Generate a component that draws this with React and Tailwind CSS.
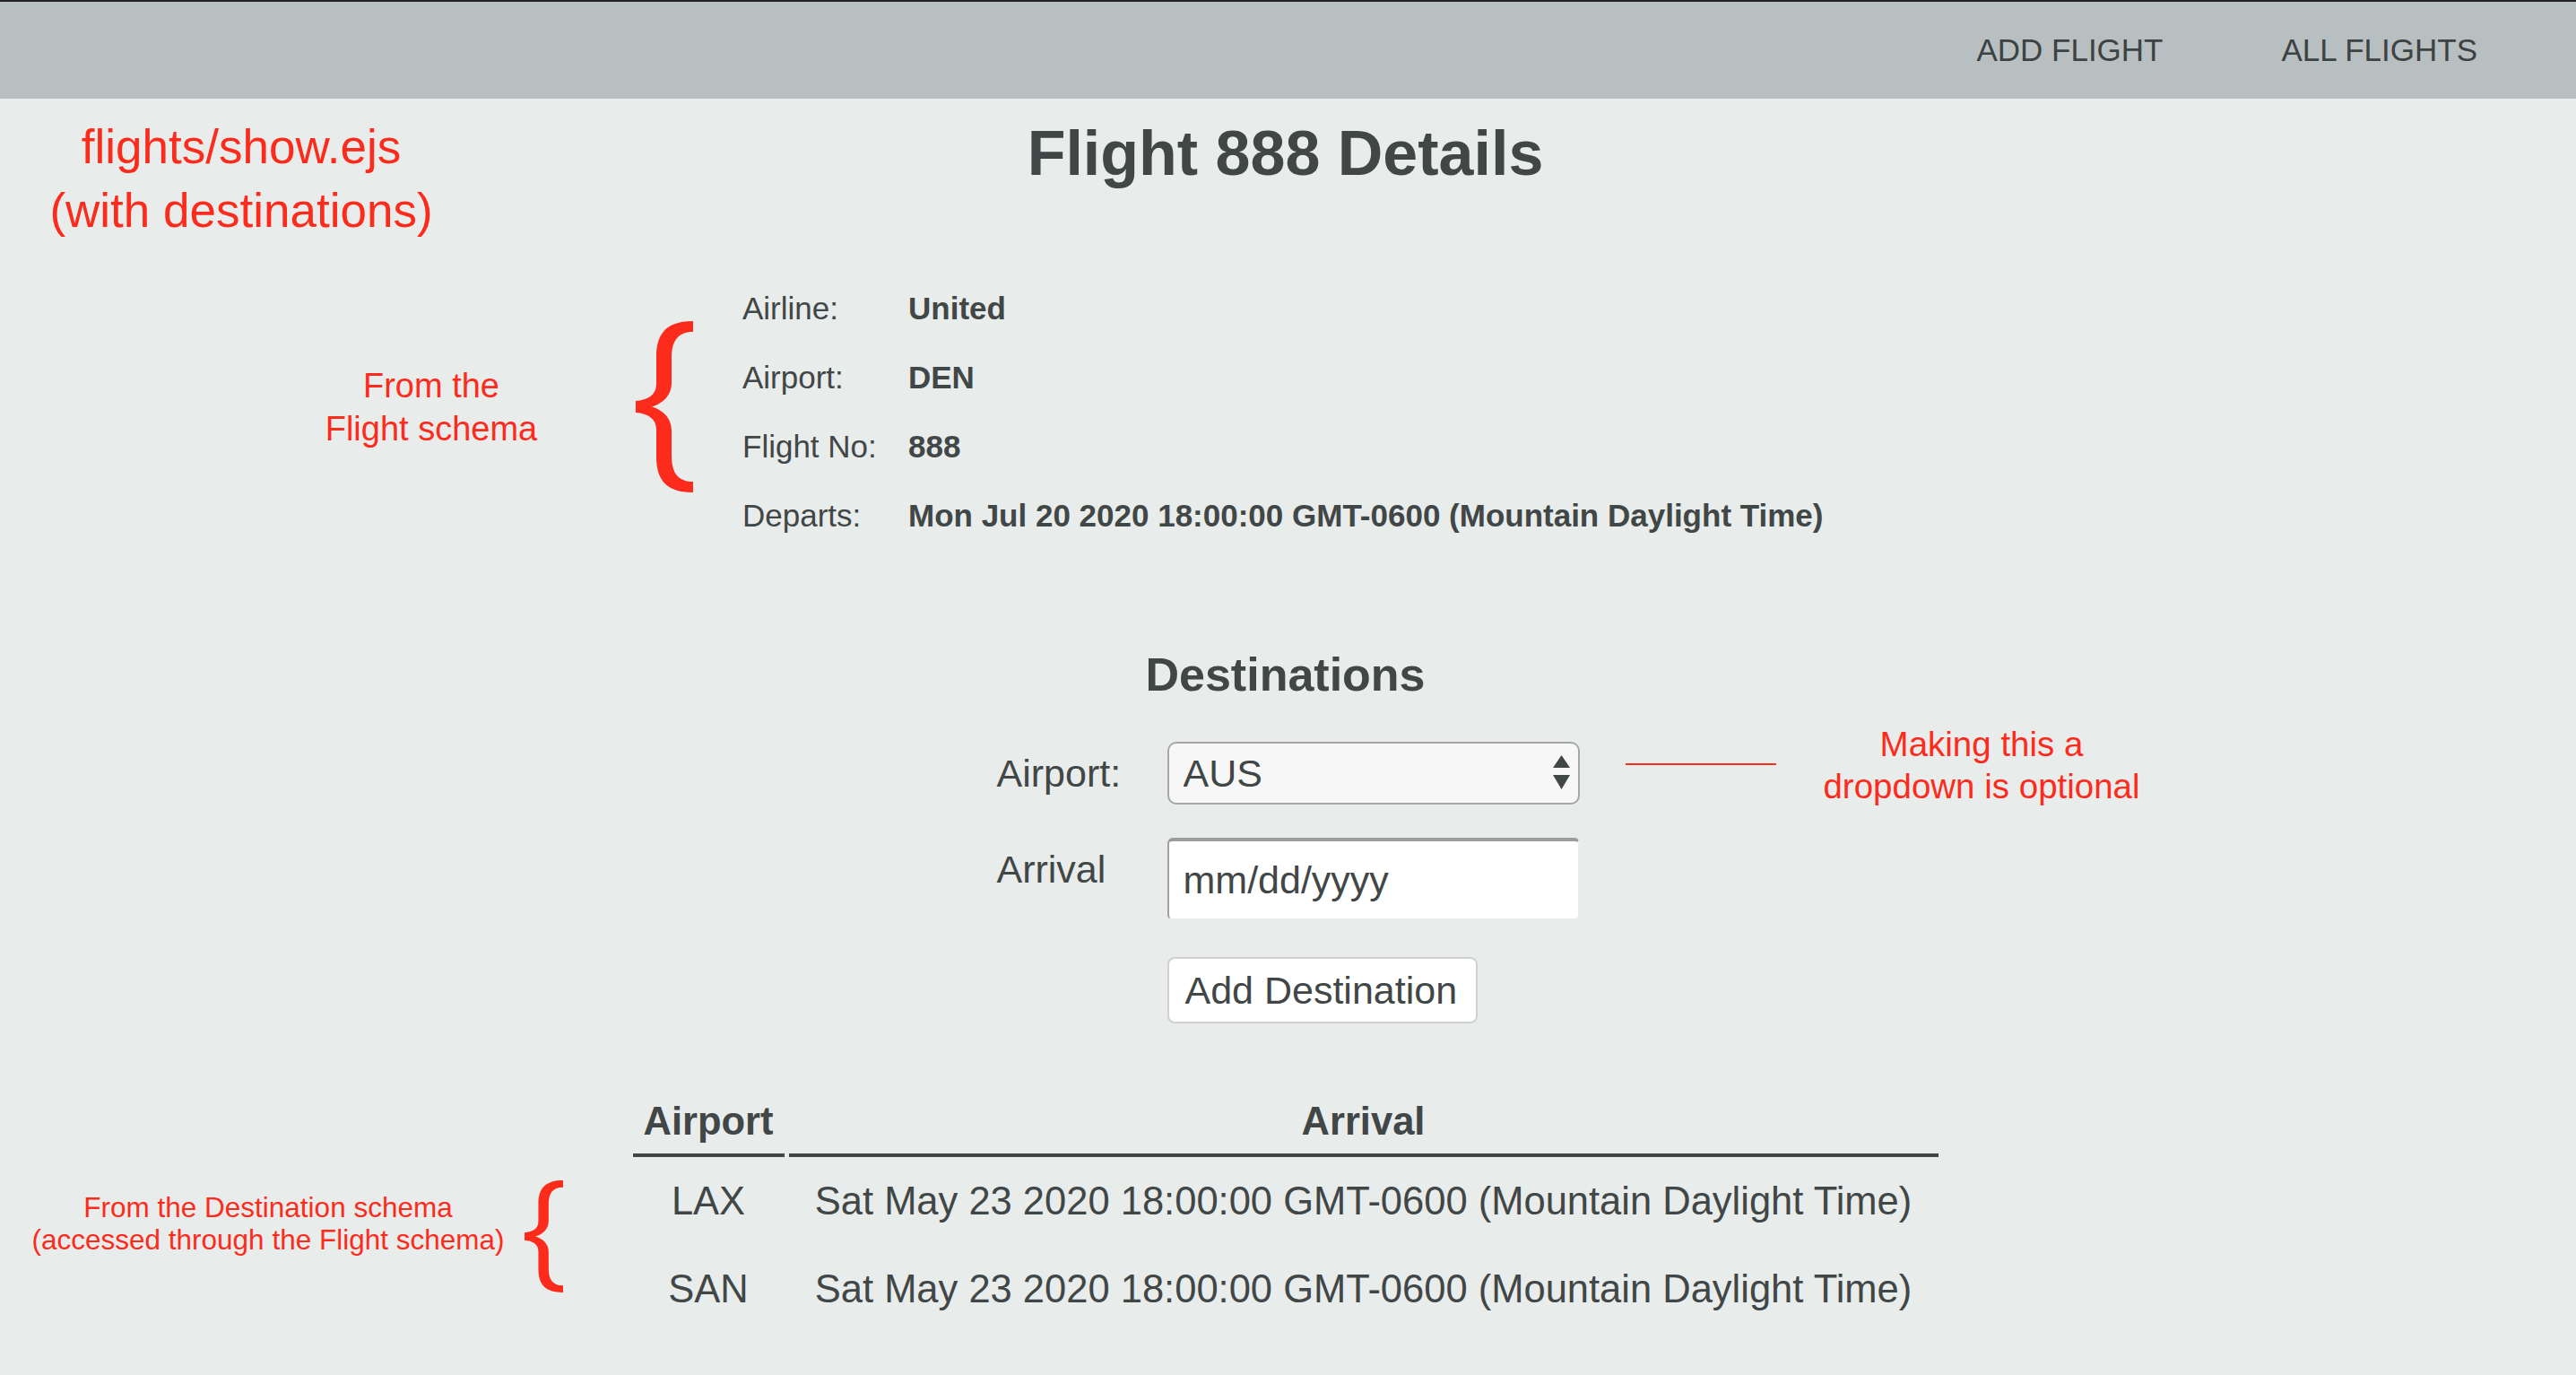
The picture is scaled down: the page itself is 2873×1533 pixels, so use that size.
import React from "react";

function Brace({ className }) {
  // curly brace used by the red annotations
  return (
    <svg viewBox="0 0 64 191" preserveAspectRatio="none" className={className}>
      <path
        fill="#fc2b1c"
        d="M64 0 C36 0 23 12 23 40 L23 70 C23 82 14 88 0 89 L0 102 C14 103 23 109 23 121 L23 151 C23 179 36 191 64 191 L64 179 C46 179 40 168 40 150 L40 122 C40 108 30 99 18 95.5 C30 92 40 83 40 69 L40 41 C40 23 46 12 64 12 Z"
      />
    </svg>
  );
}

export default function App() {
  const details = [
    { label: "Airline:", value: "United" },
    { label: "Airport:", value: "DEN" },
    { label: "Flight No:", value: "888" },
    { label: "Departs:", value: "Mon Jul 20 2020 18:00:00 GMT-0600 (Mountain Daylight Time)" },
  ];

  const destinations = [
    { airport: "LAX", arrival: "Sat May 23 2020 18:00:00 GMT-0600 (Mountain Daylight Time)" },
    { airport: "SAN", arrival: "Sat May 23 2020 18:00:00 GMT-0600 (Mountain Daylight Time)" },
  ];

  return (
    <div className="relative min-h-screen bg-[#e8eceb] text-[#414646] font-['Liberation_Sans',Arial,sans-serif]">
      {/* Nav */}
      <nav className="h-[110px] border-t-2 border-[#222222] bg-[#b8bfc1] flex items-center justify-end gap-[132px] pr-[110px] text-[35px] text-[#3d4242]">
        <a href="#">ADD FLIGHT</a>
        <a href="#">ALL FLIGHTS</a>
      </nav>

      <main className="flex flex-col items-center pr-[6px]">
        <h1 className="mt-[21px] text-[70px] leading-[80px] font-bold">Flight 888 Details</h1>

        {/* Flight details */}
        <dl className="mt-[94px] w-[1211px] grid grid-cols-[185px_1fr] text-[35px] leading-[77px]">
          {details.map(({ label, value }) => (
            <React.Fragment key={label}>
              <dt>{label}</dt>
              <dd className="font-bold">{value}</dd>
            </React.Fragment>
          ))}
        </dl>

        <h2 className="mt-[109px] text-[52px] leading-[60px] font-bold">Destinations</h2>

        {/* Add destination form */}
        <form className="mt-[45px] ml-[6px] w-[650px] flex flex-col text-[43px]">
          <div className="flex items-start">
            <label className="w-[190px] leading-[70px]">Airport:</label>
            <div className="relative">
              <select className="appearance-none w-[460px] h-[70px] border-2 border-[#a7a7a7] rounded-[10px] bg-[#f7f7f7] pl-4 text-[43px] text-[#414646] outline-none">
                <option>AUS</option>
                <option>DAL</option>
                <option>LAX</option>
                <option>SAN</option>
                <option>SEA</option>
              </select>
              <svg viewBox="0 0 19 38" className="pointer-events-none absolute right-[11px] top-[15px] w-[19px] h-[38px]">
                <polygon points="9.5,0 19,14 0,14" fill="#414646" />
                <polygon points="0,22 19,22 9.5,38" fill="#414646" />
              </svg>
            </div>
          </div>

          <div className="mt-[37px] flex items-start">
            <label className="w-[190px] leading-[70px]">Arrival</label>
            <input
              type="text"
              placeholder="mm/dd/yyyy"
              className="w-[460px] h-[92px] bg-white rounded-[6px] border-2 border-t-4 border-t-[#9c9c9c] border-l-[#a0a0a0] border-r-[#ececec] border-b-[#ececec] pl-4 text-[43px] text-[#414646] placeholder:text-[#414646] outline-none"
            />
          </div>

          <div className="mt-[41px] pl-[190px]">
            <button type="button" className="w-[346px] h-[74px] px-[18px] text-left border-2 border-[#d0d0d0] rounded-[8px] bg-white text-[43px]">
              Add Destination
            </button>
          </div>
        </form>

        {/* Destinations table */}
        <table className="mt-[84px] border-separate border-spacing-x-[5px] border-spacing-y-0 text-[43.5px]">
          <thead>
            <tr>
              <th className="w-[169px] pb-[11px] leading-[50px] font-bold border-b-4 border-[#414646]">Airport</th>
              <th className="w-[1282px] pb-[11px] leading-[50px] font-bold border-b-4 border-[#414646]">Arrival</th>
            </tr>
          </thead>
          <tbody>
            {destinations.map((d) => (
              <tr key={d.airport}>
                <td className="text-center leading-[98px]">{d.airport}</td>
                <td className="text-center leading-[98px]">{d.arrival}</td>
              </tr>
            ))}
          </tbody>
        </table>
      </main>

      {/* Red annotations */}
      <div className="absolute left-0 top-[128px] w-[538px] text-center text-[53px] leading-[71px] text-[#fc2b1c]">
        flights/show.ejs
        <br />
        (with destinations)
      </div>

      <div className="absolute left-[331px] top-[406px] w-[300px] text-center text-[38px] leading-[48px] text-[#fc2b1c]">
        From the
        <br />
        Flight schema
      </div>
      <Brace className="absolute left-[709px] top-[358px] w-[64px] h-[191px]" />

      <div className="absolute left-[1813px] top-[851px] w-[168px] h-[2px] bg-[#fc2b1c]" />
      <div className="absolute left-[1960px] top-[806px] w-[500px] text-center text-[38.5px] leading-[47px] text-[#fc2b1c]">
        Making this a
        <br />
        dropdown is optional
      </div>

      <div className="absolute left-0 top-[1328px] w-[598px] text-center text-[31.5px] leading-[36px] text-[#fc2b1c]">
        From the Destination schema
        <br />
        (accessed through the Flight schema)
      </div>
      <Brace className="absolute left-[585px] top-[1316px] w-[43px] h-[125px]" />
    </div>
  );
}
